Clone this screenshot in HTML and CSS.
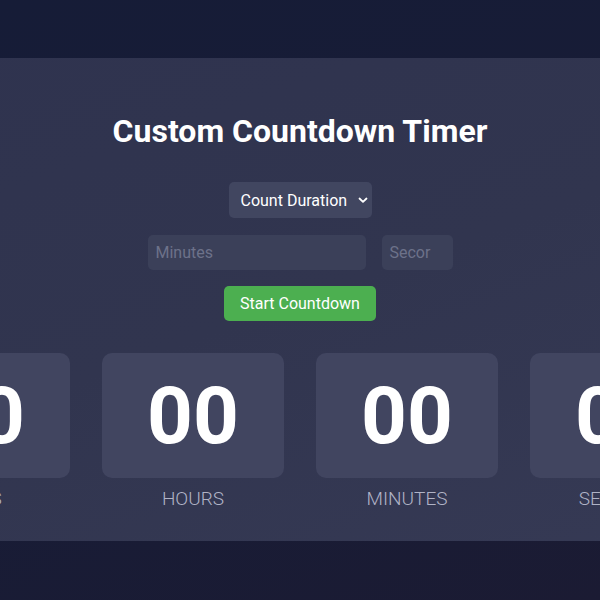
FILE: index.html
```html
<!DOCTYPE html>
<html>
<head>
<meta charset="utf-8">
<link rel="stylesheet" href="styles.css">
</head>
<body>
<div class="stage">
  <div class="card">
    <h1 class="title">Custom Countdown Timer</h1>
    <div class="select">
      <span>Count Duration</span>
      <svg class="chev" width="10" height="8" viewBox="0 0 10 8"><path d="M1.5 2.5 L5 5.8 L8.5 2.5" fill="none" stroke="#ffffff" stroke-width="1.8" stroke-linecap="round" stroke-linejoin="round"/></svg>
    </div>
    <div class="inputs">
      <div class="field wide">Minutes</div>
      <div class="field narrow">Secor</div>
    </div>
    <button class="start">Start Countdown</button>
    <div class="timer">
      <div class="unit"><div class="box">00</div><div class="label">DAYS</div></div>
      <div class="unit"><div class="box">00</div><div class="label">HOURS</div></div>
      <div class="unit"><div class="box">00</div><div class="label">MINUTES</div></div>
      <div class="unit"><div class="box">00</div><div class="label">SECONDS</div></div>
    </div>
  </div>
</div>
</body>
</html>
```

FILE: styles.css
```css
html, body {
  margin: 0;
  padding: 0;
}
body {
  width: 600px;
  height: 600px;
  overflow: hidden;
  background: linear-gradient(160deg, #161c37 0%, #181c36 60%, #1b1b33 100%);
  font-family: Roboto, "Liberation Sans", sans-serif;
  color: #ffffff;
}
.stage {
  display: flex;
  justify-content: center;
  padding-top: 58px;
}
.card {
  flex-shrink: 0;
  width: 1000px;
  height: 483px;
  box-sizing: border-box;
  background: linear-gradient(160deg, #2f334f 0%, #31354f 50%, #363a55 100%);
  display: flex;
  flex-direction: column;
  align-items: center;
  padding-top: 53px;
}
.title {
  margin: 0;
  font-size: 32px;
  font-weight: 700;
  line-height: 40px;
  color: #ffffff;
}
.select {
  margin-top: 31px;
  width: 143px;
  height: 36px;
  box-sizing: border-box;
  padding-left: 12px;
  padding-right: 4px;
  display: flex;
  align-items: center;
  justify-content: space-between;
  background: #414660;
  border-radius: 5px;
  font-size: 16px;
  color: #ffffff;
}
.chev { display: block; }
.inputs {
  margin-top: 17px;
  display: flex;
  gap: 16px;
}
.field {
  height: 35px;
  box-sizing: border-box;
  padding-left: 8px;
  display: flex;
  align-items: center;
  background: #3b4059;
  border-radius: 5px;
  font-size: 16px;
  color: #6d728a;
  overflow: hidden;
  white-space: nowrap;
}
.wide { width: 218px; }
.narrow { width: 71px; }
.start {
  margin-top: 16px;
  width: 152px;
  height: 35px;
  border: none;
  border-radius: 5px;
  background: #4caf50;
  color: #ffffff;
  font-family: Roboto, "Liberation Sans", sans-serif;
  font-size: 16px;
  padding: 0;
}
.timer {
  margin-top: 32px;
  display: flex;
  gap: 32px;
}
.unit {
  display: flex;
  flex-direction: column;
  align-items: center;
}
.box {
  width: 182px;
  height: 125px;
  border-radius: 10px;
  background: #414560;
  display: flex;
  align-items: center;
  justify-content: center;
  font-size: 80px;
  font-weight: 700;
  color: #ffffff;
}
.label {
  margin-top: 10px;
  font-size: 19px;
  font-weight: 300;
  color: #b0b3c6;
  line-height: 21px;
}
```
